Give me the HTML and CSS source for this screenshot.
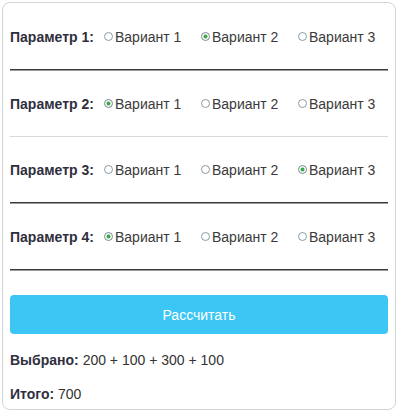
FILE: index.html
```html
<!DOCTYPE html>
<html lang="ru">
<head>
    <meta charset="UTF-8">
    <meta name="viewport" content="width=device-width, initial-scale=1.0">
    <title>Калькулятор</title>
    <link rel="stylesheet" href="styles.css">
</head>
<body>
    <div class="calc">
        <div class="param">
            <span class="param-title">Параметр 1:</span>
            <label class="option"><input type="radio" name="p1" value="100">Вариант 1</label>
            <label class="option"><input type="radio" name="p1" value="200" checked>Вариант 2</label>
            <label class="option"><input type="radio" name="p1" value="300">Вариант 3</label>
        </div>
        <hr class="sep">
        <div class="param">
            <span class="param-title">Параметр 2:</span>
            <label class="option"><input type="radio" name="p2" value="100" checked>Вариант 1</label>
            <label class="option"><input type="radio" name="p2" value="200">Вариант 2</label>
            <label class="option"><input type="radio" name="p2" value="300">Вариант 3</label>
        </div>
        <hr class="sep light">
        <div class="param">
            <span class="param-title">Параметр 3:</span>
            <label class="option"><input type="radio" name="p3" value="100">Вариант 1</label>
            <label class="option"><input type="radio" name="p3" value="200">Вариант 2</label>
            <label class="option"><input type="radio" name="p3" value="300" checked>Вариант 3</label>
        </div>
        <hr class="sep">
        <div class="param">
            <span class="param-title">Параметр 4:</span>
            <label class="option"><input type="radio" name="p4" value="100" checked>Вариант 1</label>
            <label class="option"><input type="radio" name="p4" value="200">Вариант 2</label>
            <label class="option"><input type="radio" name="p4" value="300">Вариант 3</label>
        </div>
        <hr class="sep">
        <button type="button" class="calc-btn" id="calc-btn">Рассчитать</button>
        <p class="result"><b>Выбрано:</b> <span id="chosen">200 + 100 + 300 + 100</span></p>
        <p class="result total"><b>Итого:</b> <span id="total">700</span></p>
    </div>
    <script type="text/javascript">
    document.getElementById("calc-btn").onclick = function() {
        var names = ["p1", "p2", "p3", "p4"],
            parts = [],
            sum = 0;
        for (var i = 0; i < names.length; i++) {
            var el = document.querySelector("input[name=" + names[i] + "]:checked");
            var v = el ? el.value - 0 : 0;
            parts.push(v);
            sum += v;
        }
        document.getElementById("chosen").innerText = parts.join(" + ");
        document.getElementById("total").innerText = sum;
    };
    </script>
</body>
</html>
```

FILE: styles.css
```css
* {
    box-sizing: border-box;
}

body {
    margin: 0;
    padding: 2px 4px 0 2px;
    font-family: "Liberation Sans", Arial, sans-serif;
    font-size: 14px;
    color: #333;
    background-color: #fff;
}

.calc {
    border: 1px solid #d4d4d4;
    border-radius: 8px;
    padding: 1px 7px 0;
    height: 408px;
}

.param {
    display: flex;
    align-items: center;
    height: 65px;
    line-height: 16px;
    white-space: nowrap;
}

.param-title {
    flex: none;
    width: 94px;
    font-weight: bold;
    color: #2f2f3d;
}

.option {
    flex: none;
    display: flex;
    align-items: center;
    width: 97px;
    color: #3a3a3a;
}

.option input {
    -webkit-appearance: none;
    appearance: none;
    flex: none;
    width: 9px;
    height: 9px;
    margin: 0 2px 0 0;
    border: 1px solid #8a9aa8;
    border-radius: 50%;
    background-color: #fff;
}

.option input:checked {
    background: radial-gradient(circle, #3aa84a 0, #3aa84a 1.6px, #fff 2.4px);
    border-color: #7a8a90;
}

.sep {
    margin: 0;
    border: 0;
    border-top: 1px solid #3b3b3b;
    border-bottom: 1px solid #9a9a9a;
}

.sep.light {
    border-top: 1px solid #d8d8d8;
    border-bottom: 0;
}

.calc-btn {
    display: block;
    width: 100%;
    height: 39px;
    margin-top: 24px;
    border: 0;
    border-radius: 4px;
    background-color: #3cc6f4;
    color: #fff;
    font-family: "Liberation Sans", Arial, sans-serif;
    font-size: 14px;
}

.result {
    margin: 18px 0 0;
    line-height: 16px;
    color: #333;
}

.result b {
    color: #2f2f3d;
}

.total {
    margin-top: 18px;
}
```
